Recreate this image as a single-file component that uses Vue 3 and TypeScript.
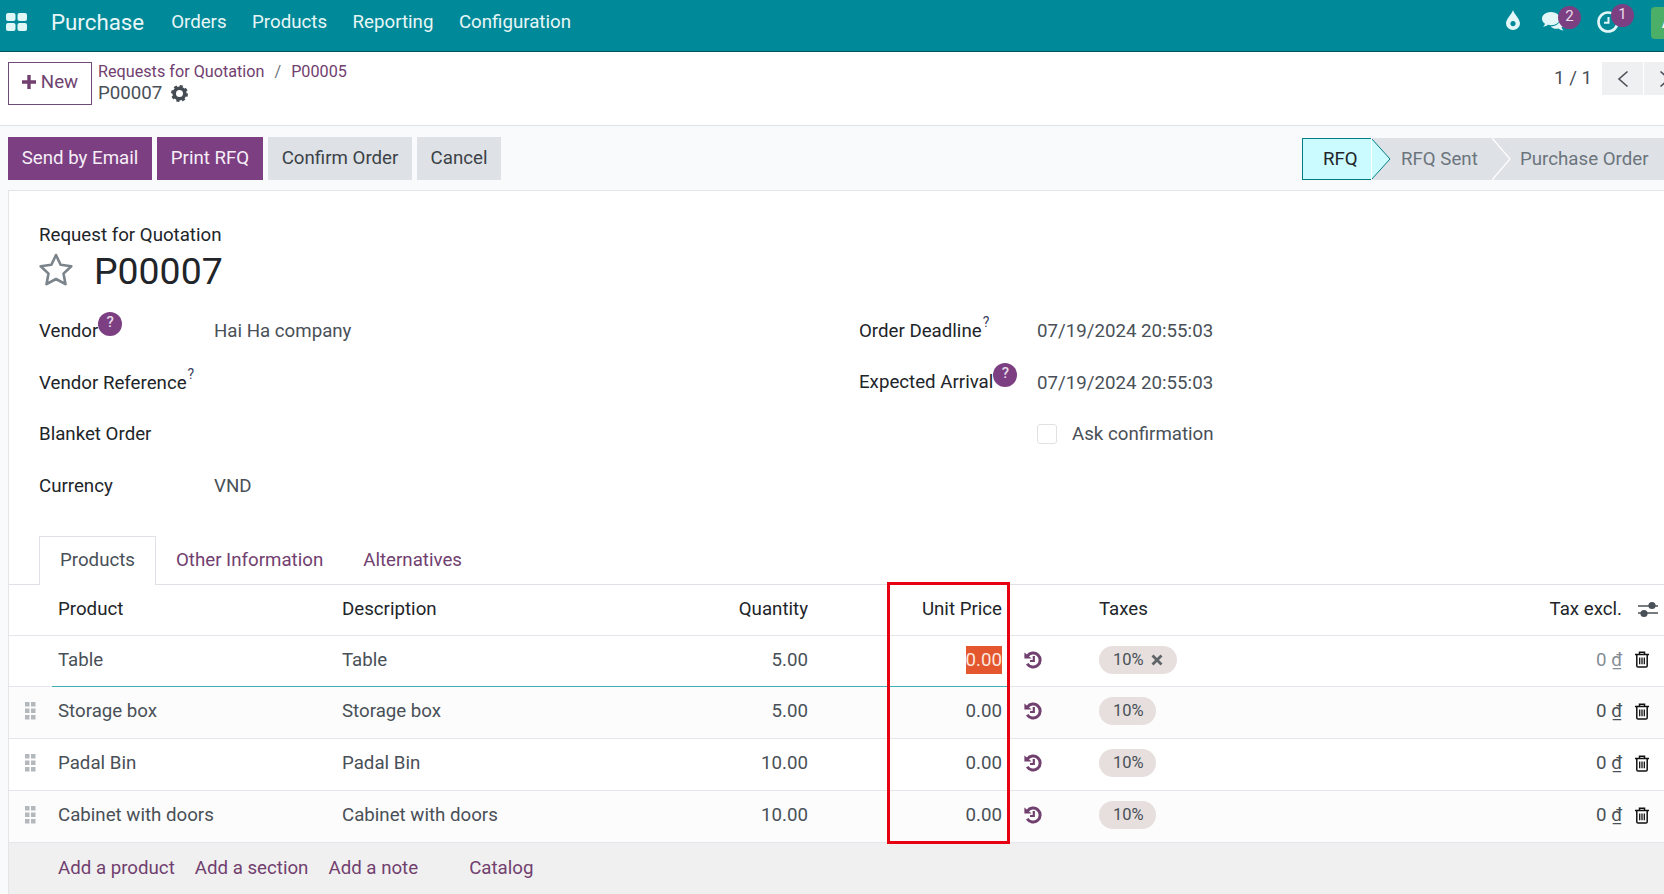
<script setup lang="ts">
const menus: string[] = ['Orders', 'Products', 'Reporting', 'Configuration']
const rows = [
  { name: 'Table', qty: '5.00', active: true },
  { name: 'Storage box', qty: '5.00', active: false },
  { name: 'Padal Bin', qty: '10.00', active: false },
  { name: 'Cabinet with doors', qty: '10.00', active: false },
]
const dots: number[][] = [[0, 0], [6, 0], [0, 6.5], [6, 6.5], [0, 13], [6, 13]]
</script>

<template>
  <div class="page">
    <header class="nav">
      <svg class="apps" viewBox="0 0 21 18" width="21" height="18">
        <rect x="0" y="0" width="9.5" height="8" rx="2" fill="#dff7f7" />
        <rect x="11.5" y="0" width="9.5" height="8" rx="2" fill="#dff7f7" />
        <rect x="0" y="10" width="9.5" height="8" rx="2" fill="#dff7f7" />
        <rect x="11.5" y="10" width="9.5" height="8" rx="2" fill="#dff7f7" />
      </svg>
      <span class="brand">Purchase</span>
      <nav class="menu">
        <span v-for="m in menus" :key="m">{{ m }}</span>
      </nav>
      <div class="systray">
        <svg class="drop" viewBox="0 0 14 20" width="14" height="20">
          <path fill-rule="evenodd" fill="#e3f7f8" d="M7 0C8 4 14 9 14 13.500A7 6.500 0 0 1 0 13.500C0 9 6 4 7 0ZM7 11a2.600 2.600 0 1 0 .01 0Z" />
        </svg>
        <span class="tray-item chat">
          <svg viewBox="0 0 25 21" width="25" height="21">
            <path fill="#e3f7f8" d="M10 1C4.800 1 1 4 1 7.700c0 2 1.100 3.700 3 5-.3 1.200-1 2.200-2 3 2 0 3.800-.8 5-1.900 1 .3 2 .4 3 .4 5.200 0 9-3 9-6.500S15.200 1 10 1Z" />
            <path fill="#e3f7f8" d="M19.500 7.500c.1 4-4 8-9.800 8 1.300 1.500 3.400 2.300 5.800 2.300.7 0 1.400-.1 2-.2 1.200 1 2.900 1.900 5 2-1-.9-1.700-1.900-2-3 1.600-1 2.500-2.500 2.500-4 0-2-1.400-3.900-3.500-5.100Z" />
          </svg>
          <b class="badge">2</b>
        </span>
        <span class="tray-item clock">
          <svg viewBox="0 0 22 22" width="22" height="22">
            <circle cx="11" cy="11" r="9.500" fill="none" stroke="#e3f7f8" stroke-width="2.600" />
            <path d="M11.500 6v5.800H7" fill="none" stroke="#e3f7f8" stroke-width="2" />
          </svg>
          <b class="badge">1</b>
        </span>
        <span class="avatar">A</span>
      </div>
    </header>

    <section class="control">
      <button class="new-btn">
        <svg viewBox="0 0 14 14" width="14" height="14"><path d="M7 0v14M0 7h14" stroke="#71406f" stroke-width="3.400" /></svg>
        New
      </button>
      <div class="crumbs">
        <div class="crumb-line"><a>Requests for Quotation</a><i>/</i><a>P00005</a></div>
        <div class="crumb-current">
          P00007
          <svg viewBox="0 0 16 16" width="17" height="17">
            <circle cx="8" cy="8" r="5" fill="none" stroke="#444b52" stroke-width="3.400" />
            <circle cx="8" cy="8" r="6.700" fill="none" stroke="#444b52" stroke-width="2.600" stroke-dasharray="2.800 2.460" />
          </svg>
        </div>
      </div>
      <div class="pager">
        <span class="count">1 / 1</span>
        <span class="page-btn">
          <svg viewBox="0 0 12 18" width="12" height="18"><path d="M10.500 1.500 2 9l8.500 7.500" fill="none" stroke="#495057" stroke-width="1.600" /></svg>
        </span>
        <span class="page-btn">
          <svg viewBox="0 0 12 18" width="12" height="18"><path d="M1.500 1.500 10 9l-8.500 7.500" fill="none" stroke="#495057" stroke-width="1.600" /></svg>
        </span>
      </div>
    </section>

    <section class="actions">
      <button class="btn primary btn-send">Send by Email</button>
      <button class="btn primary btn-print">Print RFQ</button>
      <button class="btn secondary btn-confirm">Confirm Order</button>
      <button class="btn secondary btn-cancel">Cancel</button>
      <div class="status">
        <span class="stage current">
          RFQ
          <svg class="arrow" viewBox="0 0 20 42" width="20" height="42"><path d="M0 0 19 21 0 42Z" fill="#ccfbff" /><path d="M0 0 19 21 0 42" fill="none" stroke="#017e84" stroke-width="1" /><path d="M0 0V42" stroke="#fff" stroke-width="2" /></svg>
        </span>
        <span class="stage sent">
          RFQ Sent
          <svg class="arrow" viewBox="0 0 20 42" width="20" height="42"><path d="M0 0 18 21 0 42" fill="none" stroke="#fff" stroke-width="1.200" /></svg>
        </span>
        <span class="stage order">Purchase Order</span>
      </div>
    </section>

    <main class="sheet">
      <div class="head">
        <div class="doc-label">Request for Quotation</div>
        <div class="title-row">
          <svg class="star" viewBox="0 0 36 34" width="36" height="34">
            <path d="M18 3l4.600 9.800 10.700 1.400-7.800 7.400 2 10.600L18 27l-9.500 5.200 2-10.600-7.800-7.400 10.700-1.400Z" fill="none" stroke="#7b838b" stroke-width="2.600" stroke-linejoin="round" />
          </svg>
          <h1>P00007</h1>
        </div>
      </div>

      <div class="groups">
        <div class="group left">
          <div class="lbl">Vendor<b class="help">?</b></div>
          <div class="val">Hai Ha company</div>
          <div class="lbl">Vendor Reference<sup>?</sup></div>
          <div class="val"></div>
          <div class="lbl">Blanket Order</div>
          <div class="val"></div>
          <div class="lbl">Currency</div>
          <div class="val">VND</div>
        </div>
        <div class="group right">
          <div class="lbl">Order Deadline<sup>?</sup></div>
          <div class="val">07/19/2024 20:55:03</div>
          <div class="lbl">Expected Arrival<b class="help">?</b></div>
          <div class="val">07/19/2024 20:55:03</div>
          <div class="lbl"></div>
          <div class="val check"><span class="box"></span>Ask confirmation</div>
        </div>
      </div>

      <div class="tabs">
        <span class="tab on">Products</span>
        <span class="tab">Other Information</span>
        <span class="tab">Alternatives</span>
      </div>

      <div class="table">
        <div class="row header">
          <span></span>
          <span class="cell">Product</span>
          <span class="cell">Description</span>
          <span class="cell num">Quantity</span>
          <span class="cell num">Unit Price</span>
          <span></span>
          <span class="cell">Taxes</span>
          <span class="cell num">Tax excl.</span>
          <span class="opt">
            <svg viewBox="0 0 20 17" width="20" height="17">
              <path d="M0 5h20M0 12h20" stroke="#495057" stroke-width="1.500" />
              <circle cx="14" cy="4.500" r="3.600" fill="#495057" />
              <circle cx="6" cy="12.500" r="3.600" fill="#495057" />
            </svg>
          </span>
        </div>

        <div v-for="(r, i) in rows" :key="r.name" class="row body" :class="{ active: r.active, striped: i % 2 === 1 }">
          <span class="handle">
            <svg v-if="!r.active" viewBox="0 0 12 18" width="12" height="18">
              <rect v-for="d in dots" :key="d.join()" :x="d[0]" :y="d[1]" width="4.500" height="4.500" fill="#b3b8bd" />
            </svg>
          </span>
          <span class="cell">{{ r.name }}</span>
          <span class="cell">{{ r.name }}</span>
          <span class="cell num">{{ r.qty }}</span>
          <span class="cell num"><span :class="{ selected: r.active }">0.00</span></span>
          <span class="hist">
            <svg viewBox="0 0 18 18" width="18" height="18">
              <path d="M3.400 5A7 7 0 1 1 3.200 12.800" fill="none" stroke="#71406f" stroke-width="3" />
              <path d="M0.400 1.400 7.600 7.600H0.400Z" fill="#71406f" />
              <path d="M9.800 5v5H6" fill="none" stroke="#71406f" stroke-width="2.200" />
            </svg>
          </span>
          <span class="cell">
            <span class="tag">10%<svg v-if="r.active" class="tag-x" viewBox="0 0 12 12" width="12" height="12"><path d="M1.500 1.500 10.500 10.500M10.500 1.500 1.500 10.500" stroke="#5f6468" stroke-width="2.800" /></svg></span>
          </span>
          <span class="cell num amount">0 <u>₫</u></span>
          <span class="trash">
            <svg viewBox="0 0 14 17" width="14" height="17">
              <path d="M0 3.500h14M4.500 3.500V1.300h5v2.200" fill="none" stroke="#111" stroke-width="1.500" />
              <path d="M1.800 3.500v11.200q0 1.300 1.300 1.300h7.800q1.300 0 1.300-1.300V3.500" fill="none" stroke="#111" stroke-width="1.500" />
              <path d="M4.700 6.500v6.800M7 6.500v6.800M9.300 6.500v6.800" stroke="#111" stroke-width="1.300" />
            </svg>
          </span>
        </div>

        <div class="add-row">
          <a>Add a product</a>
          <a>Add a section</a>
          <a>Add a note</a>
          <a class="catalog">Catalog</a>
        </div>

        <div class="highlight"></div>
      </div>
    </main>
  </div>
</template>

<style scoped>
.page {
  width: 1664px;
  height: 894px;
  overflow: hidden;
  background: #f9fafb;
  font-family: Roboto, "Liberation Sans", sans-serif;
  font-size: 18.700px;
  line-height: 24px;
  color: #212529;
  display: flex;
  flex-direction: column;
}
.nav {
  flex: none;
  height: 51px;
  box-sizing: content-box;
  background: #008a99;
  border-bottom: 1px solid #00565f;
  display: flex;
  align-items: center;
  color: #e8f6f7;
  padding-left: 6px;
}
.apps {
  margin-top: -8px;
}
.brand {
  font-size: 22.300px;
  margin-left: 24px;
  margin-top: -7px;
}
.menu {
  display: flex;
  gap: 25.500px;
  margin-left: 27px;
  margin-top: -8px;
}
.systray {
  margin-left: auto;
  margin-right: -19px;
  display: flex;
  align-items: center;
  color: #fff;
}
.drop {
  margin-top: -11px;
}
.tray-item {
  position: relative;
  display: flex;
}
.chat {
  margin-left: 21px;
  margin-top: -9px;
}
.clock {
  margin-left: 31px;
  margin-top: -8px;
}
.badge {
  position: absolute;
  width: 23px;
  height: 23px;
  border-radius: 50%;
  background: #7c3f82;
  color: #e9dcea;
  font-weight: 400;
  font-size: 15px;
  line-height: 20px;
  text-align: center;
}
.chat .badge {
  left: 17px;
  top: -5px;
}
.clock .badge {
  left: 14px;
  top: -7px;
}
.avatar {
  width: 32px;
  height: 32px;
  margin-left: 32px;
  margin-top: -6px;
  border-radius: 4px;
  background: #4caf68;
  color: #fff;
  font-size: 16px;
  line-height: 32px;
  text-align: center;
}
.control {
  flex: none;
  background: #fff;
  border-bottom: 1px solid #dee2e6;
  display: flex;
  align-items: flex-start;
  padding: 10px 0 0 8px;
  box-sizing: border-box;
  height: 74px;
}
.new-btn {
  width: 84px;
  height: 43px;
  border: 1px solid #714b77;
  background: #fff;
  color: #6f4471;
  font: inherit;
  padding: 0 0 3px;
  display: flex;
  align-items: center;
  justify-content: center;
  gap: 5px;
}
.crumbs {
  margin-left: 6px;
  line-height: 22px;
  margin-top: -1px;
}
.crumb-line {
  color: #71406f;
  font-size: 16.200px;
  display: flex;
  gap: 10px;
}
.crumb-line i {
  font-style: normal;
  color: #6c757d;
}
.crumb-current {
  display: flex;
  align-items: center;
  gap: 9px;
  font-size: 18.700px;
  color: #495057;
  margin-top: -1px;
}
.pager {
  margin-left: auto;
  margin-right: -21px;
  display: flex;
  align-items: center;
  gap: 1px;
  height: 33px;
}
.count {
  color: #495057;
  margin-right: 9px;
  margin-top: -2px;
}
.page-btn {
  width: 41px;
  height: 33px;
  background: #eff0f1;
  display: flex;
  align-items: center;
  justify-content: center;
}
.actions {
  flex: none;
  height: 64px;
  box-sizing: border-box;
  padding-top: 11px;
  padding-left: 8px;
  display: flex;
  align-items: flex-start;
  gap: 5px;
}
.btn {
  height: 43px;
  border: 0;
  padding: 0 0 2px;
  font: inherit;
}
.btn-send { width: 144px; }
.btn-print { width: 106px; }
.btn-confirm { width: 144px; }
.btn-cancel { width: 84px; }
.primary {
  background: #7c3f82;
  color: #f6eef7;
}
.secondary {
  background: #dee2e6;
  color: #3c4248;
}
.status {
  margin-left: auto;
  display: flex;
  width: 362px;
  height: 43px;
  margin-top: 1px;
}
.stage {
  position: relative;
  height: 42px;
  box-sizing: border-box;
  display: flex;
  align-items: center;
  background: #dee2e6;
  color: #6c757d;
  white-space: nowrap;
}
.arrow {
  position: absolute;
  left: 100%;
  top: 0;
  z-index: 1;
}
.current {
  width: 70px;
  background: #ccfbff;
  border: 1px solid #017e84;
  color: #212529;
  padding-left: 20px;
}
.current .arrow {
  top: -1px;
}
.sent {
  width: 120px;
  padding-left: 29px;
}
.order {
  flex: 1;
  padding-left: 28px;
}
.sheet {
  flex: 1;
  background: #fff;
  margin-left: 8px;
  border-top: 1px solid #e3e5e8;
  border-left: 1px solid #e3e5e8;
  display: flex;
  flex-direction: column;
  min-height: 0;
}
.head {
  padding: 32px 0 0 30px;
}
.title-row {
  display: flex;
  align-items: center;
  height: 46px;
  margin-top: 1px;
}
.star {
  margin-left: -1px;
  margin-top: -4px;
}
h1 {
  margin: 0 0 0 20px;
  font-size: 37.400px;
  font-weight: 400;
  line-height: 46px;
  color: #212529;
}
.groups {
  display: flex;
  padding-left: 30px;
  margin-top: 11px;
}
.group {
  display: grid;
  grid-auto-rows: 51.500px;
  align-items: center;
}
.left {
  width: 820px;
  grid-template-columns: 175px 1fr;
}
.right {
  grid-template-columns: 178px 1fr;
}
.lbl {
  position: relative;
  white-space: nowrap;
  padding-top: 1px;
}
.val {
  color: #495057;
  padding-top: 1px;
}
sup {
  font-size: 14px;
  line-height: 0;
  color: #3b3f5c;
  position: relative;
  top: -3px;
  margin-left: 1px;
  vertical-align: super;
}
.help {
  display: inline-block;
  width: 24px;
  height: 24px;
  border-radius: 50%;
  background: #7c3f82;
  color: #e9dcea;
  font-size: 15px;
  font-weight: 500;
  line-height: 21px;
  text-align: center;
  position: relative;
  top: -8px;
  vertical-align: middle;
}
.check {
  display: flex;
  align-items: center;
  gap: 15px;
}
.box {
  width: 18px;
  height: 18px;
  border: 1px solid #dfe2e5;
  border-radius: 3px;
  background: #fff;
}
.tabs {
  margin-top: 25px;
  height: 49px;
  box-sizing: border-box;
  padding-left: 30px;
  display: flex;
  border-bottom: 1px solid #dee2e6;
}
.tab {
  padding: 0 19px;
  line-height: 47px;
  height: 49px;
  box-sizing: border-box;
  color: #71406f;
  border: 1px solid transparent;
  border-bottom: 0;
}
.tab.on {
  background: #fff;
  color: #495057;
  border-color: #dee2e6;
  padding: 0 20px;
}
.table {
  position: relative;
  flex: 1;
}
.row {
  display: grid;
  grid-template-columns: 43px 284px 284px 194px 194px 85px 407px 128px 36px;
  align-items: center;
  height: 52px;
  box-sizing: border-box;
  border-bottom: 1px solid #e3e6ea;
  padding-bottom: 3px;
}
.header {
  height: 51px;
  color: #212529;
  padding-bottom: 2px;
}
.body {
  color: #495057;
}
.body.active {
  height: 51px;
}
.striped {
  background: #fcfcfc;
}
.active {
  position: relative;
}
.active::after {
  content: "";
  position: absolute;
  left: 43px;
  width: 955px;
  bottom: -1px;
  height: 1px;
  background: #3fb0b5;
}
.cell {
  padding: 0 6px;
  white-space: nowrap;
}
.num {
  text-align: right;
}
.amount {
  color: #495057;
}
.amount u {
  text-underline-offset: 2px;
}
.active .amount {
  color: #868e96;
}
.handle {
  display: flex;
  padding-left: 16px;
}
.hist {
  display: flex;
  padding-left: 16px;
}
.opt {
  display: flex;
  padding-left: 10px;
}
.trash {
  display: flex;
  padding-left: 7px;
}
.selected {
  display: inline-block;
  background: #e4572e;
  color: #fbe6df;
  height: 28px;
  line-height: 28px;
}
.tag {
  display: inline-flex;
  align-items: center;
  height: 28px;
  padding: 0 12px 0 14px;
  border-radius: 14px;
  background: #e6dfdd;
  color: #495057;
  font-size: 16.500px;
}
.tag-x {
  margin-left: 7px;
  margin-right: 2px;
}
.add-row {
  height: 51px;
  background: #f0f0f0;
  display: flex;
  align-items: center;
  padding: 0 0 1px 49px;
  box-sizing: border-box;
  gap: 20px;
  color: #71406f;
}
.catalog {
  margin-left: 31px;
}
.highlight {
  position: absolute;
  left: 878px;
  top: -3px;
  width: 123px;
  height: 262px;
  box-sizing: border-box;
  border: 3px solid #e60012;
  pointer-events: none;
}
</style>

<style>
html,
body {
  margin: 0;
  overflow: hidden;
}
</style>
